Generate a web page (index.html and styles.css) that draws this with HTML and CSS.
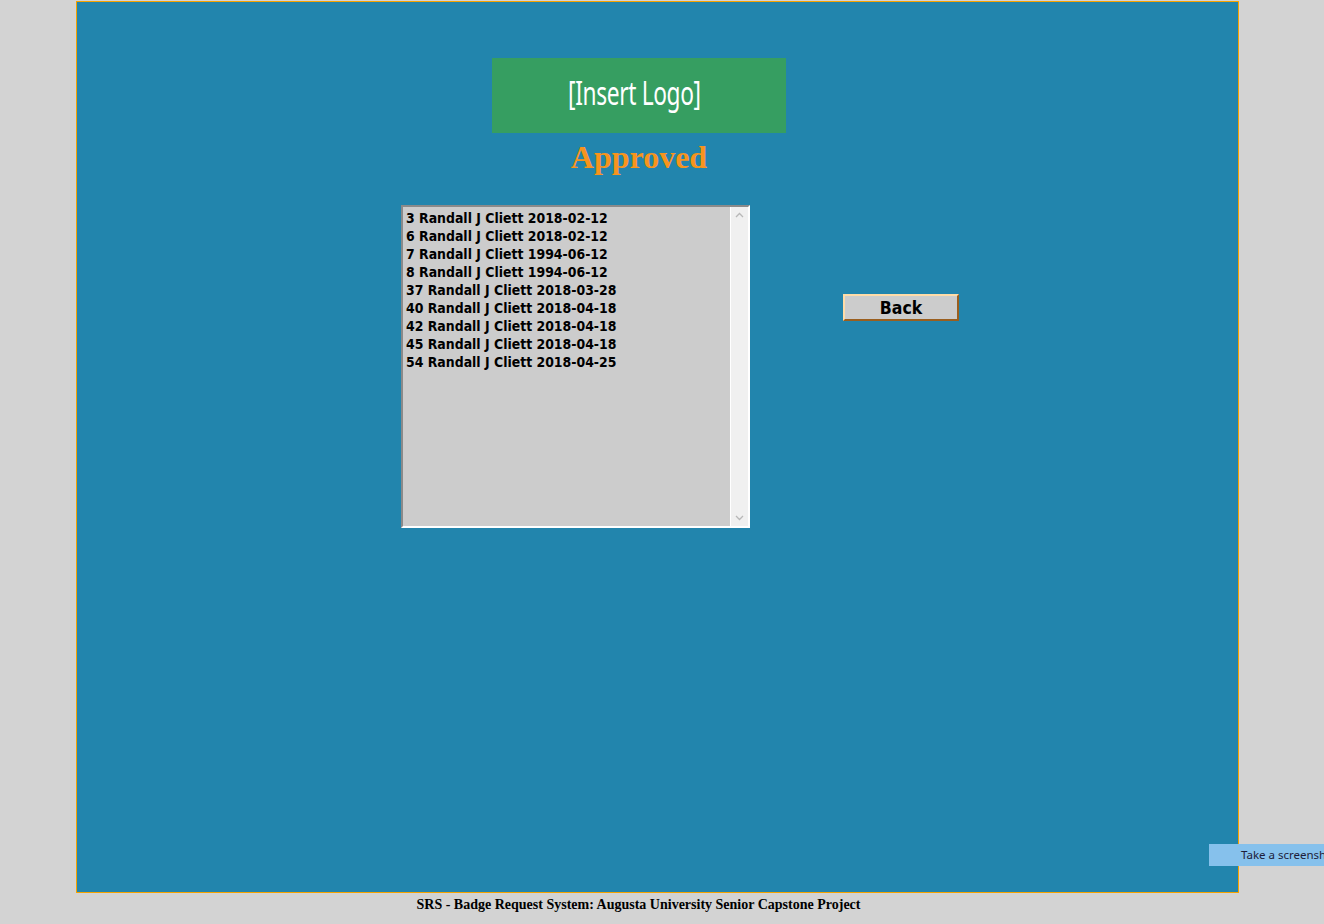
FILE: index.html
```html
<!DOCTYPE html>
<html>
<head>
<meta charset="utf-8">
<title>SRS - Approved</title>
<link rel="stylesheet" href="styles.css">
</head>
<body>
<div class="panel">
  <div class="header">
    <div class="logo"><span class="logo-text">[Insert Logo]</span></div>
    <h1 class="title">Approved</h1>
  </div>
  <div class="main">
    <div class="listbox">
      <ul class="items">
        <li>3 Randall J Cliett 2018-02-12</li>
        <li>6 Randall J Cliett 2018-02-12</li>
        <li>7 Randall J Cliett 1994-06-12</li>
        <li>8 Randall J Cliett 1994-06-12</li>
        <li>37 Randall J Cliett 2018-03-28</li>
        <li>40 Randall J Cliett 2018-04-18</li>
        <li>42 Randall J Cliett 2018-04-18</li>
        <li>45 Randall J Cliett 2018-04-18</li>
        <li>54 Randall J Cliett 2018-04-25</li>
      </ul>
      <div class="scrollbar">
        <svg class="arrow" width="9" height="6" viewBox="0 0 9 6"><path d="M1 5 L4.5 1.5 L8 5" fill="none" stroke="#b8b8b8" stroke-width="1.3"/></svg>
        <svg class="arrow" width="9" height="6" viewBox="0 0 9 6"><path d="M1 1 L4.5 4.5 L8 1" fill="none" stroke="#b8b8b8" stroke-width="1.3"/></svg>
      </div>
    </div>
    <button class="back">Back</button>
  </div>
</div>
<div class="footer">SRS - Badge Request System: Augusta University Senior Capstone Project</div>
<div class="snip">Take a screensh</div>
</body>
</html>
```
FILE: styles.css
```css
html, body {
  margin: 0;
  padding: 0;
}
body {
  background: #d3d3d3;
  padding-top: 1px;
  width: 1324px;
  height: 923px;
  overflow: hidden;
  position: relative;
}
.panel {
  margin-left: 76px;
  width: 1161px;
  height: 890px;
  border: 1px solid #f5a300;
  background: #2285ad;
}
.header {
  width: 1124px;
  display: flex;
  flex-direction: column;
  align-items: center;
}
.logo {
  margin-top: 56px;
  width: 294px;
  height: 75px;
  background: #369e61;
  display: flex;
  align-items: center;
  justify-content: center;
  padding-bottom: 6px;
  padding-right: 10px;
  box-sizing: border-box;
}
.logo-text {
  color: #ffffff;
  font-family: "Noto Sans", sans-serif;
  font-weight: 400;
  font-size: 32px;
  letter-spacing: -0.5px;
  display: inline-block;
  transform: scaleX(0.71);
  white-space: nowrap;
}
.title {
  margin: 5px 0 0 0;
  font-family: "Liberation Serif", serif;
  font-weight: bold;
  font-size: 32px;
  line-height: 38px;
  color: #f7941d;
}
.main {
  display: flex;
  align-items: flex-start;
  padding-left: 324px;
  margin-top: 29px;
}
.listbox {
  width: 349px;
  height: 323px;
  box-sizing: border-box;
  border-top: 2px solid #8a8a8a;
  border-left: 2px solid #8a8a8a;
  border-right: 2px solid #ffffff;
  border-bottom: 2px solid #ffffff;
  background: #cccccc;
  display: flex;
}
.items {
  list-style: none;
  margin: 0;
  padding: 2px 0 0 3px;
  flex: 1;
  font-family: "DejaVu Sans Condensed", "DejaVu Sans", sans-serif;
  font-weight: bold;
  font-size: 13.9px;
  line-height: 18px;
  color: #000000;
}
.scrollbar {
  width: 17px;
  background: #f0f0f0;
  border-left: 1px solid #ffffff;
  display: flex;
  flex-direction: column;
  justify-content: space-between;
  align-items: center;
  padding: 5px 0 5px 0;
}
.back {
  margin-left: 93px;
  margin-top: 89px;
  width: 116px;
  height: 27px;
  box-sizing: border-box;
  background: #cccccc;
  border-style: solid;
  border-width: 2px;
  border-color: #ffdca8 #9a5e1e #9a5e1e #ffdca8;
  font-family: "DejaVu Sans Condensed", "DejaVu Sans", sans-serif;
  font-weight: bold;
  font-size: 17.5px;
  color: #000000;
  padding: 1px 0 0 0;
  line-height: 21px;
}
.footer {
  width: 1277px;
  text-align: center;
  margin-top: 2px;
  font-family: "Liberation Serif", serif;
  font-weight: bold;
  font-size: 14px;
  line-height: 20px;
  color: #000000;
}
.snip {
  position: absolute;
  left: 1209px;
  top: 844px;
  width: 115px;
  height: 22px;
  background: #86c1ec;
  color: #1d1d3a;
  font-family: "Noto Sans", sans-serif;
  font-size: 11.5px;
  line-height: 22px;
  padding-left: 32px;
  box-sizing: border-box;
  white-space: nowrap;
  overflow: hidden;
}
```
